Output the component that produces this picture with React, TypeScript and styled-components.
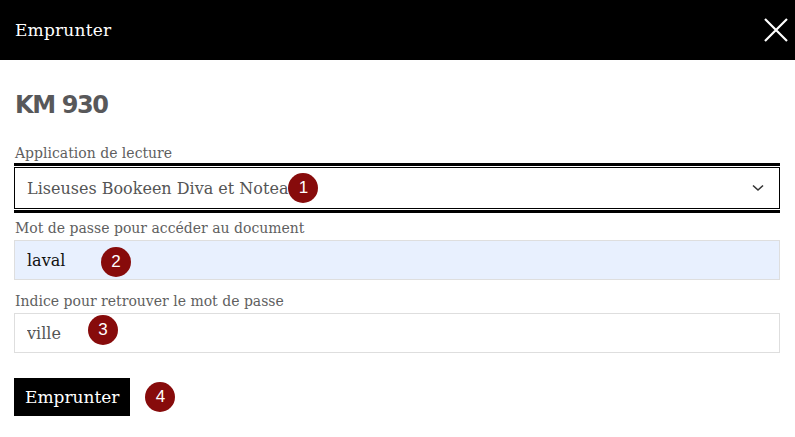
import React from 'react';
import styled, { createGlobalStyle } from 'styled-components';

const GlobalStyle = createGlobalStyle`
  html, body {
    margin: 0;
    padding: 0;
    background: #fff;
  }
  body {
    font-family: "DejaVu Serif", "Liberation Serif", serif;
  }
  * { box-sizing: border-box; }
`;

const Modal = styled.div`
  width: 795px;
  min-height: 437px;
  background: #fff;
`;

const Header = styled.header`
  display: flex;
  justify-content: space-between;
  align-items: center;
  height: 60px;
  background: #000;
  padding: 0 4px 0 15px;
`;

const HeaderTitle = styled.h1`
  margin: 0;
  font-size: 17px;
  font-weight: 400;
  color: #fff;
  letter-spacing: 0.2px;
`;

const CloseButton = styled.button`
  display: flex;
  align-items: center;
  justify-content: center;
  width: 30px;
  height: 30px;
  border: none;
  background: none;
  padding: 0;
  cursor: pointer;
`;

const Body = styled.div`
  padding: 30px 15px 0 14px;
`;

const Title = styled.h2`
  margin: 0 0 23px 1px;
  font-family: "DejaVu Sans", "Liberation Sans", sans-serif;
  font-weight: 700;
  font-size: 24px;
  line-height: 30px;
  letter-spacing: -1.4px;
  color: #58585a;
`;

const Field = styled.div<{ $gap?: number }>`
  margin-bottom: ${p => p.$gap ?? 0}px;
`;

const Label = styled.label<{ $tight?: boolean }>`
  display: block;
  margin-left: 1px;
  margin-bottom: ${p => (p.$tight ? 0 : 2)}px;
  font-size: 14px;
  line-height: 20px;
  color: #5f5f5f;
`;

const SelectFrame = styled.div`
  border-top: 3px solid #000;
  border-bottom: 3px solid #000;
  padding: 1px 0;
`;

const SelectBox = styled.div`
  display: flex;
  align-items: center;
  height: 42px;
  border: 1px solid #000;
  padding: 0 15px 0 12px;
  font-size: 16px;
  color: #555;
`;

const SelectText = styled.span`
  flex: 1;
  display: flex;
  align-items: center;
`;

const InputWrap = styled.div`
  position: relative;
`;

const TextInput = styled.input<{ $filled?: boolean; $dark?: boolean }>`
  display: block;
  width: 100%;
  height: 40px;
  border: 1px solid #dedede;
  background: ${p => (p.$filled ? '#e8f0fe' : '#fff')};
  padding: 0 12px;
  font-family: "DejaVu Serif", "Liberation Serif", serif;
  font-size: 16px;
  color: ${p => (p.$dark ? '#111' : '#555')};
  outline: none;
`;

const Badge = styled.span`
  display: inline-flex;
  align-items: center;
  justify-content: center;
  width: 30px;
  height: 30px;
  border-radius: 50%;
  background: #870b0b;
  color: #fff;
  font-family: "Liberation Sans", Arial, sans-serif;
  font-size: 17px;
  flex: none;
`;

const FloatingBadge = styled(Badge)<{ $left: number; $top: number }>`
  position: absolute;
  left: ${p => p.$left}px;
  top: ${p => p.$top}px;
`;

const Actions = styled.div`
  display: flex;
  align-items: center;
  gap: 15px;
`;

const SubmitButton = styled.button`
  height: 38px;
  padding: 0 11px;
  border: none;
  background: #000;
  color: #fff;
  font-family: "DejaVu Serif", "Liberation Serif", serif;
  font-size: 17px;
  cursor: pointer;
`;

export default function App() {
  return (
    <>
      <GlobalStyle />
      <Modal>
        <Header>
          <HeaderTitle>Emprunter</HeaderTitle>
          <CloseButton aria-label="Fermer">
            <svg width="26" height="26" viewBox="0 0 26 26">
              <path d="M2 2 L24 24 M24 2 L2 24" stroke="#fff" strokeWidth="2.2" />
            </svg>
          </CloseButton>
        </Header>
        <Body>
          <Title>KM 930</Title>
          <Field $gap={5}>
            <Label $tight>Application de lecture</Label>
            <SelectFrame>
              <SelectBox>
                <SelectText>
                  Liseuses Bookeen Diva et Notea
                  <Badge>1</Badge>
                </SelectText>
                <svg width="12" height="8" viewBox="0 0 12 8">
                  <path d="M1 1.5 L6 6 L11 1.5" fill="none" stroke="#333" strokeWidth="1.6" />
                </svg>
              </SelectBox>
            </SelectFrame>
          </Field>
          <Field $gap={11}>
            <Label>Mot de passe pour accéder au document</Label>
            <InputWrap>
              <TextInput $filled $dark defaultValue="laval" readOnly />
              <FloatingBadge $left={87} $top={7}>2</FloatingBadge>
            </InputWrap>
          </Field>
          <Field $gap={25}>
            <Label>Indice pour retrouver le mot de passe</Label>
            <InputWrap>
              <TextInput defaultValue="ville" readOnly />
              <FloatingBadge $left={74} $top={2}>3</FloatingBadge>
            </InputWrap>
          </Field>
          <Actions>
            <SubmitButton>Emprunter</SubmitButton>
            <Badge>4</Badge>
          </Actions>
        </Body>
      </Modal>
    </>
  );
}
